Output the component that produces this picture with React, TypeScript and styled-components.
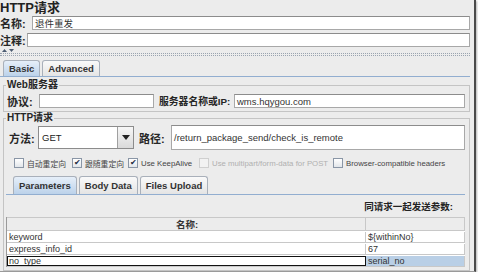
import React from 'react';
import styled, { createGlobalStyle } from 'styled-components';

const Global = createGlobalStyle`
  html, body {
    margin: 0;
    padding: 0;
    background: #ffffff;
  }
  body {
    font-family: "Liberation Sans", "Noto Sans CJK SC", sans-serif;
    color: #1a1a1a;
  }
`;

const CJK = `"Liberation Sans", "Noto Sans CJK SC", sans-serif`;

const Frame = styled.div`
  width: 474px;
  height: 271px;
  background: #ececec;
  border-right: 2px solid #4a4a4a;
  border-bottom: 1px solid #9a9a9a;
  box-shadow: 1px 1px 2px rgba(0, 0, 0, 0.3);
  display: flex;
  flex-direction: column;
  overflow: hidden;
  font-family: ${CJK};
`;

const Title = styled.div`
  font-size: 13px;
  font-weight: bold;
  line-height: 15px;
  height: 16px;
  color: #222;
`;

const Row = styled.div<{ $h?: number; $top?: number }>`
  display: flex;
  align-items: center;
  height: ${(p) => p.$h ?? 14}px;
  margin-top: ${(p) => p.$top ?? 0}px;
  padding-right: 4px;
`;

const Label = styled.span<{ $w?: number; $size?: number; $pad?: number }>`
  flex: 0 0 auto;
  box-sizing: border-box;
  width: ${(p) => (p.$w ? `${p.$w}px` : 'auto')};
  padding-left: ${(p) => p.$pad ?? 0}px;
  font-size: ${(p) => p.$size ?? 11}px;
  font-weight: bold;
  white-space: nowrap;
  color: #262626;
`;

const Input = styled.div<{ $w?: number; $h?: number }>`
  flex: ${(p) => (p.$w ? `0 0 ${p.$w}px` : '1 1 auto')};
  height: ${(p) => p.$h ?? 14}px;
  box-sizing: border-box;
  background: #ffffff;
  border: 1px solid #a8a8a8;
  border-top-color: #8c8c8c;
  display: flex;
  align-items: center;
  padding-left: 2px;
  font-size: 9.5px;
  color: #333;
  white-space: nowrap;
  overflow: hidden;
`;

const Splitter = styled.div`
  position: relative;
  height: 3px;
  margin-top: 6px;
  border-top: 1px dotted #9aa4b0;
  border-bottom: 1px dotted #9aa4b0;
  margin-right: 4px;
`;

const SplitArrows = styled.span`
  position: absolute;
  left: 2px;
  top: -5px;
  display: flex;
  gap: 2px;
`;

const TabBar = styled.div<{ $pad: number; $top: number }>`
  display: flex;
  align-items: flex-end;
  gap: 2px;
  padding-left: ${(p) => p.$pad}px;
  margin-top: ${(p) => p.$top}px;
  border-bottom: 1px solid #92aed0;
  margin-right: 4px;
`;

const Tab = styled.div<{ $active?: boolean; $h: number }>`
  height: ${(p) => p.$h}px;
  box-sizing: border-box;
  padding: 0 5px;
  display: flex;
  align-items: center;
  font-size: 9.5px;
  font-weight: bold;
  color: #333;
  border: 1px solid #a9b0ba;
  border-bottom: none;
  border-radius: 3px 3px 0 0;
  background: ${(p) =>
    p.$active
      ? 'linear-gradient(#e6eff9, #bcd2ea)'
      : 'linear-gradient(#fafafa, #e4e4e4)'};
`;

const Group = styled.fieldset<{ $top: number }>`
  margin: ${(p) => p.$top}px 4px 0 3px;
  padding: 0 0 3px 2px;
  border: 1px solid #c4c4c4;
  min-width: 0;
`;

const Legend = styled.legend`
  padding: 0 1px;
  margin-left: 0;
  font-size: 10px;
  font-weight: bold;
  line-height: 10px;
  color: #262626;
`;

const Combo = styled.div`
  flex: 0 0 96px;
  height: 23px;
  box-sizing: border-box;
  display: flex;
  border: 1px solid #8c8c8c;
  background: #fff;
`;

const ComboText = styled.div`
  flex: 1;
  display: flex;
  align-items: center;
  padding-left: 3px;
  font-size: 9.5px;
  color: #222;
`;

const ComboButton = styled.div`
  flex: 0 0 15px;
  border-left: 1px solid #a0a0a0;
  background: linear-gradient(#f7f7f7, #dadada);
  display: flex;
  align-items: center;
  justify-content: center;
`;

const Checks = styled.div`
  display: flex;
  align-items: center;
  height: 16px;
  margin-top: 5px;
  padding-left: 8px;
`;

const Check = styled.label<{ $disabled?: boolean; $w: number }>`
  display: flex;
  align-items: center;
  gap: 3px;
  width: ${(p) => p.$w}px;
  font-size: 7.8px;
  color: ${(p) => (p.$disabled ? '#b0b0b0' : '#444')};
  white-space: nowrap;
`;

const Box = styled.span<{ $disabled?: boolean }>`
  width: 10px;
  height: 10px;
  box-sizing: border-box;
  border: 1px solid ${(p) => (p.$disabled ? '#cfcfcf' : '#8a96a6')};
  background: ${(p) => (p.$disabled ? '#f2f2f2' : 'linear-gradient(#ffffff, #e2e6ea)')};
  display: flex;
  align-items: center;
  justify-content: center;
  font-size: 8px;
  line-height: 8px;
  color: #1a2a40;
  flex: 0 0 auto;
`;

const ParamTitle = styled.div`
  display: flex;
  justify-content: flex-end;
  padding-right: 16px;
  height: 21px;
  margin-top: 0;
  align-items: center;
  font-size: 9.5px;
  font-weight: bold;
  color: #222;
`;

const Table = styled.div`
  margin-top: 1px;
  border-left: 1px solid #9a9a9a;
  margin-right: 4px;
`;

const TRow = styled.div<{ $head?: boolean }>`
  display: grid;
  grid-template-columns: 359px 1fr;
  height: ${(p) => (p.$head ? 14 : 12)}px;
  background: ${(p) => (p.$head ? '#ececec' : '#ffffff')};
  border-top: 1px solid ${(p) => (p.$head ? '#c8c8c8' : 'transparent')};
  border-bottom: 1px solid #c8c8c8;
  box-sizing: border-box;
`;

const Cell = styled.div<{ $head?: boolean; $sel?: boolean; $focus?: boolean }>`
  display: flex;
  align-items: center;
  justify-content: ${(p) => (p.$head ? 'center' : 'flex-start')};
  padding-left: 2px;
  font-size: ${(p) => (p.$head ? 9.5 : 9)}px;
  font-weight: ${(p) => (p.$head ? 'bold' : 'normal')};
  color: #333;
  border-right: 1px solid #c8c8c8;
  background: ${(p) => (p.$sel ? '#b9cfe6' : 'transparent')};
  outline: ${(p) => (p.$focus ? '1px solid #111' : 'none')};
  outline-offset: -1px;
  white-space: nowrap;
  overflow: hidden;
`;

const rows = [
  { name: 'keyword', value: '${withinNo}' },
  { name: 'express_info_id', value: '67' },
  { name: 'no_type', value: 'serial_no', selected: true },
];

function Arrow() {
  return (
    <svg width="8" height="5" viewBox="0 0 8 5">
      <path d="M0 0 L8 0 L4 5 Z" fill="#222" />
    </svg>
  );
}

function SplitIcons() {
  return (
    <SplitArrows>
      <svg width="5" height="3" viewBox="0 0 5 3">
        <path d="M0 3 L5 3 L2.5 0 Z" fill="#4c5c72" />
      </svg>
      <svg width="5" height="3" viewBox="0 0 5 3">
        <path d="M0 0 L5 0 L2.5 3 Z" fill="#4c5c72" />
      </svg>
    </SplitArrows>
  );
}

export default function App() {
  return (
    <>
      <Global />
      <Frame>
        <Title>HTTP请求</Title>
        <Row $top={1}>
          <Label $w={32}>名称:</Label>
          <Input>退件重发</Input>
        </Row>
        <Row $top={3}>
          <Label $w={27}>注释:</Label>
          <Input />
        </Row>
        <Splitter>
          <SplitIcons />
        </Splitter>
        <TabBar $pad={3} $top={4}>
          <Tab $h={16} $active>Basic</Tab>
          <Tab $h={16}>Advanced</Tab>
        </TabBar>
        <Group $top={3}>
          <Legend>Web服务器</Legend>
          <Row $top={4}>
            <Label $w={33} $pad={1}>协议:</Label>
            <Input $w={115} />
            <Label $w={80} $size={9.8} $pad={5}>
              服务器名称或IP:
            </Label>
            <Input>wms.hqygou.com</Input>
          </Row>
        </Group>
        <Group $top={1}>
          <Legend>HTTP请求</Legend>
          <Row $h={25} $top={2}>
            <Label $w={32} $pad={3}>
              方法:
            </Label>
            <Combo>
              <ComboText>GET</ComboText>
              <ComboButton>
                <Arrow />
              </ComboButton>
            </Combo>
            <Label $w={37} $pad={5}>
              路径:
            </Label>
            <Input $h={25}>/return_package_send/check_is_remote</Input>
          </Row>
          <Checks>
            <Check $w={58}>
              <Box />
              自动重定向
            </Check>
            <Check $w={56}>
              <Box>✔</Box>
              跟随重定向
            </Check>
            <Check $w={71}>
              <Box>✔</Box>
              Use KeepAlive
            </Check>
            <Check $w={134} $disabled>
              <Box $disabled />
              Use multipart/form-data for POST
            </Check>
            <Check $w={110}>
              <Box />
              Browser-compatible headers
            </Check>
          </Checks>
          <TabBar $pad={7} $top={5}>
            <Tab $h={18} $active>
              Parameters
            </Tab>
            <Tab $h={18}>Body Data</Tab>
            <Tab $h={18}>Files Upload</Tab>
          </TabBar>
          <ParamTitle>同请求一起发送参数:</ParamTitle>
          <Table>
            <TRow $head>
              <Cell $head>名称:</Cell>
              <Cell $head />
            </TRow>
            {rows.map((r) => (
              <TRow key={r.name}>
                <Cell $focus={r.selected}>{r.name}</Cell>
                <Cell $sel={r.selected}>{r.value}</Cell>
              </TRow>
            ))}
          </Table>
        </Group>
      </Frame>
    </>
  );
}
